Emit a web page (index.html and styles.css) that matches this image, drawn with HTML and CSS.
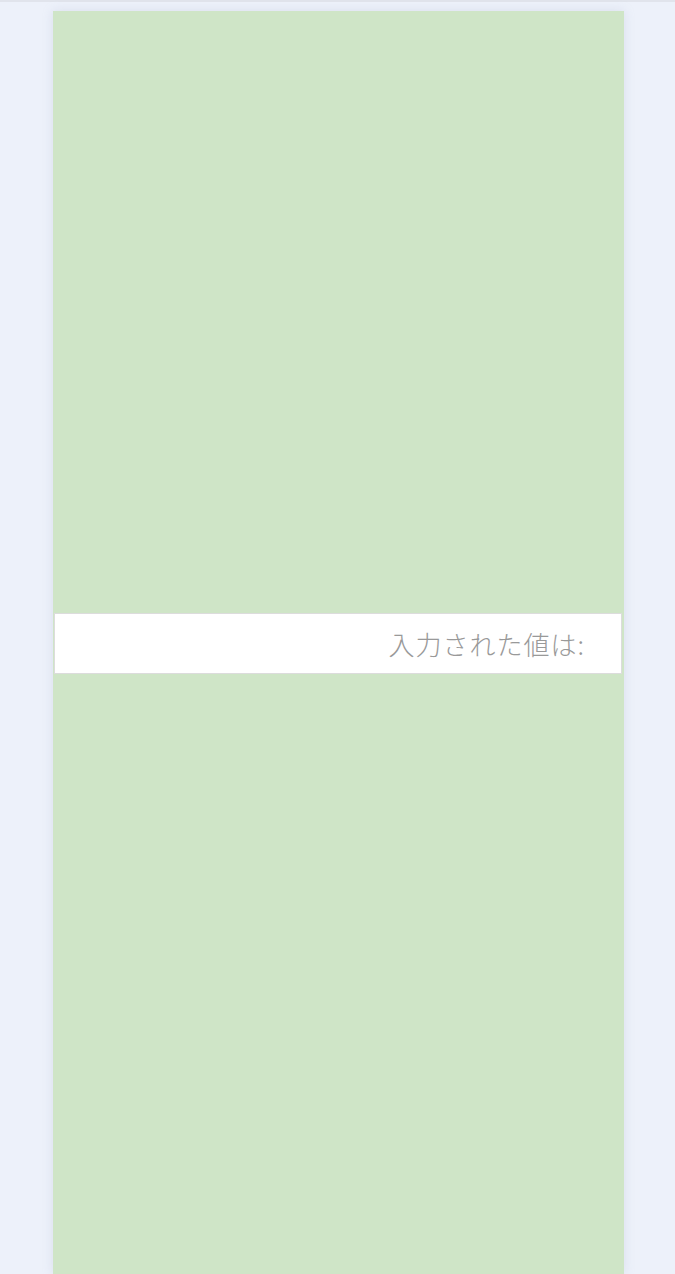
FILE: index.html
```html
<!DOCTYPE html>
<html lang="ja">

<head>
  <meta charset="UTF-8">
  <meta name="viewport" content="width=device-width, initial-scale=1.0">
  <title>入力</title>
  <link rel="stylesheet" href="styles.css">
</head>

<body>
  <div class="top-bar"></div>
  <div class="page">
    <div class="panel">
      <div class="panel-space"></div>
      <div class="field">
        <input class="field-input" type="text" placeholder="入力された値は:">
      </div>
      <div class="panel-space panel-space-bottom"></div>
    </div>
  </div>
</body>

</html>
```

FILE: styles.css
```css
* {
  margin: 0;
  padding: 0;
  box-sizing: border-box;
}

html,
body {
  height: 100%;
}

body {
  background-color: #edf1fa;
  font-family: "Noto Sans CJK JP", "Noto Sans", sans-serif;
  overflow: hidden;
  display: flex;
  flex-direction: column;
}

.top-bar {
  height: 2px;
  background-color: #e1e4ec;
}

.page {
  flex: 1;
  display: flex;
  padding: 9px 0 0 53px;
}

.panel {
  width: 571px;
  background-color: #cfe5c7;
  box-shadow: 0 0 10px rgba(160, 170, 200, .25);
  display: flex;
  flex-direction: column;
}

.panel-space {
  height: 602px;
}

.panel-space-bottom {
  height: auto;
  flex: 1;
}

.field {
  padding: 0 1px;
  margin-right: 1px;
}

.field-input {
  display: block;
  width: 100%;
  height: 61px;
  border: 1px solid #dcdcdc;
  background-color: #fff;
  text-align: right;
  padding: 0 36px 0 10px;
  font-family: "Noto Sans CJK JP", sans-serif;
  font-size: 26px;
  font-weight: 300;
  letter-spacing: 1px;
  color: #999;
  outline: none;
}

.field-input::placeholder {
  color: #999;
}
```
